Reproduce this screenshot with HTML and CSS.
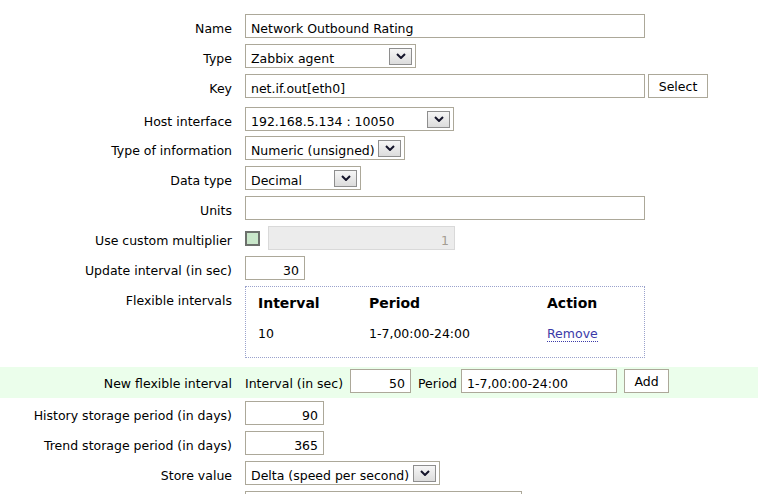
FILE: index.html
```html
<!DOCTYPE html>
<html>
<head>
<meta charset="utf-8">
<link rel="stylesheet" href="styles.css">
</head>
<body>
<div class="form">
  <div class="row">
    <span class="lbl">Name</span>
    <div class="field"><input class="ctl w400" value="Network Outbound Rating"></div>
  </div>
  <div class="row">
    <span class="lbl">Type</span>
    <div class="field"><div class="ctl sel w171"><span class="sel-text">Zabbix agent</span><span class="arrow"><svg width="10" height="6" viewBox="0 0 10 6"><path d="M1 1 L5 5 L9 1" fill="none" stroke="#14142a" stroke-width="2"/></svg></span></div></div>
  </div>
  <div class="row">
    <span class="lbl">Key</span>
    <div class="field"><input class="ctl w400" value="net.if.out[eth0]"><button class="btn btn-select">Select</button></div>
  </div>
  <div class="row row-host">
    <span class="lbl">Host interface</span>
    <div class="field"><div class="ctl sel w209"><span class="sel-text">192.168.5.134 : 10050</span><span class="arrow"><svg width="10" height="6" viewBox="0 0 10 6"><path d="M1 1 L5 5 L9 1" fill="none" stroke="#14142a" stroke-width="2"/></svg></span></div></div>
  </div>
  <div class="row">
    <span class="lbl">Type of information</span>
    <div class="field"><div class="ctl sel w160"><span class="sel-text">Numeric (unsigned)</span><span class="arrow"><svg width="10" height="6" viewBox="0 0 10 6"><path d="M1 1 L5 5 L9 1" fill="none" stroke="#14142a" stroke-width="2"/></svg></span></div></div>
  </div>
  <div class="row">
    <span class="lbl">Data type</span>
    <div class="field"><div class="ctl sel w116"><span class="sel-text">Decimal</span><span class="arrow"><svg width="10" height="6" viewBox="0 0 10 6"><path d="M1 1 L5 5 L9 1" fill="none" stroke="#14142a" stroke-width="2"/></svg></span></div></div>
  </div>
  <div class="row">
    <span class="lbl">Units</span>
    <div class="field"><input class="ctl w400" value=""></div>
  </div>
  <div class="row">
    <span class="lbl">Use custom multiplier</span>
    <div class="field gap8"><span class="check"></span><input class="ctl num disabled w187" value="1" disabled></div>
  </div>
  <div class="row">
    <span class="lbl">Update interval (in sec)</span>
    <div class="field"><input class="ctl num w60" value="30"></div>
  </div>
  <div class="row row-top">
    <span class="lbl">Flexible intervals</span>
    <div class="field">
      <div class="flex-box">
        <span class="th">Interval</span><span class="th">Period</span><span class="th">Action</span>
        <span class="td">10</span><span class="td">1-7,00:00-24:00</span><span class="td"><a class="link">Remove</a></span>
      </div>
    </div>
  </div>
  <div class="row row-new">
    <span class="lbl">New flexible interval</span>
    <div class="field">
      <span class="inl w100">Interval (in sec)</span>
      <input class="ctl num w61 ml5" value="50">
      <span class="inl ml7">Period</span>
      <input class="ctl w156 ml4" value="1-7,00:00-24:00">
      <button class="btn btn-add ml7">Add</button>
    </div>
  </div>
  <div class="row row-after">
    <span class="lbl">History storage period (in days)</span>
    <div class="field"><input class="ctl num w79" value="90"></div>
  </div>
  <div class="row">
    <span class="lbl">Trend storage period (in days)</span>
    <div class="field"><input class="ctl num w79" value="365"></div>
  </div>
  <div class="row">
    <span class="lbl">Store value</span>
    <div class="field"><div class="ctl sel w195"><span class="sel-text">Delta (speed per second)</span><span class="arrow"><svg width="10" height="6" viewBox="0 0 10 6"><path d="M1 1 L5 5 L9 1" fill="none" stroke="#14142a" stroke-width="2"/></svg></span></div></div>
  </div>
  <div class="row">
    <span class="lbl"></span>
    <div class="field"><div class="ctl w277"></div></div>
  </div>
</div>
</body>
</html>
```

FILE: styles.css
```css
html, body {
  margin: 0;
  padding: 0;
  background: #ffffff;
  overflow: hidden;
}
body {
  font-family: "DejaVu Sans", Verdana, sans-serif;
  font-size: 12.5px;
  color: #000;
}
.form {
  display: flex;
  flex-direction: column;
  gap: 6px;
  padding-top: 14px;
}
.row {
  display: grid;
  grid-template-columns: 232px 1fr;
  column-gap: 13px;
  align-items: center;
}
.row-host { margin-top: 3px; margin-bottom: -1px; }
.row-top { align-items: start; }
.row-new {
  background: #ebfeeb;
  margin-top: 3px;
  padding: 2px 0 5px;
}
.row-after { margin-top: -3px; }
.lbl {
  display: block;
  height: 24px;
  box-sizing: border-box;
  padding-top: 7px;
  line-height: 15px;
  text-align: right;
  white-space: nowrap;
}
.field {
  display: flex;
  align-items: center;
}
.gap8 { gap: 8px; }
.ctl {
  height: 24px;
  box-sizing: border-box;
  border: 1px solid #aca899;
  background: #fff;
  padding: 6px 5px 1px;
  line-height: 15px;
  font-family: "DejaVu Sans", Verdana, sans-serif;
  font-size: 12.5px;
  color: #000;
  margin: 0;
  outline: none;
  border-radius: 0;
}
.num { text-align: right; }
.disabled {
  background: #ececec;
  border-color: #d9d9d9;
  color: #a49c92;
}
.btn {
  height: 24px;
  box-sizing: border-box;
  border: 1px solid #aca899;
  background: #fff;
  font-family: "DejaVu Sans", Verdana, sans-serif;
  font-size: 12.5px;
  color: #000;
  padding: 1px 0 0;
  line-height: 15px;
  margin: 0;
  border-radius: 0;
}
.btn-select { width: 60px; margin-left: 3px; }
.btn-add { width: 45px; }
.w400 { width: 400px; }
.w171 { width: 171px; }
.w209 { width: 209px; }
.w160 { width: 160px; }
.w116 { width: 116px; }
.w195 { width: 195px; }
.w187 { width: 187px; }
.w60 { width: 60px; }
.w61 { width: 61px; }
.w79 { width: 79px; }
.w100 { width: 100px; }
.w156 { width: 156px; }
.w277 { width: 277px; }
.ml4 { margin-left: 4px; }
.ml5 { margin-left: 5px; }
.ml7 { margin-left: 7px; }
.sel {
  display: flex;
  justify-content: space-between;
  align-items: center;
  padding: 0 3px 0 5px;
}
.sel-text {
  align-self: flex-start;
  margin-top: 6px;
  white-space: nowrap;
}
.arrow {
  width: 23px;
  height: 17px;
  box-sizing: border-box;
  border: 1px solid #8e8e8e;
  background: linear-gradient(#f6f6f6, #dcdcdc);
  display: flex;
  align-items: center;
  justify-content: center;
  flex: none;
}
.arrow svg { display: block; }
.check {
  width: 15px;
  height: 15px;
  box-sizing: border-box;
  border: 2px solid #6c706c;
  background: #c9e7ca;
  flex: none;
}
.inl {
  height: 24px;
  box-sizing: border-box;
  padding-top: 7px;
  line-height: 15px;
  white-space: nowrap;
  flex: none;
}
.flex-box {
  width: 400px;
  height: 72px;
  box-sizing: border-box;
  border: 1px dotted #9aa2cc;
  display: grid;
  grid-template-columns: 111px 178px auto;
  grid-template-rows: 17px 15px;
  row-gap: 14px;
  padding: 8px 12px 0;
}
.th {
  font-weight: bold;
  font-size: 14px;
  line-height: 17px;
  white-space: nowrap;
}
.td {
  line-height: 15px;
  white-space: nowrap;
}
.link {
  color: #3b3aa8;
  border-bottom: 1px dotted #3b3aa8;
  cursor: pointer;
}
```
